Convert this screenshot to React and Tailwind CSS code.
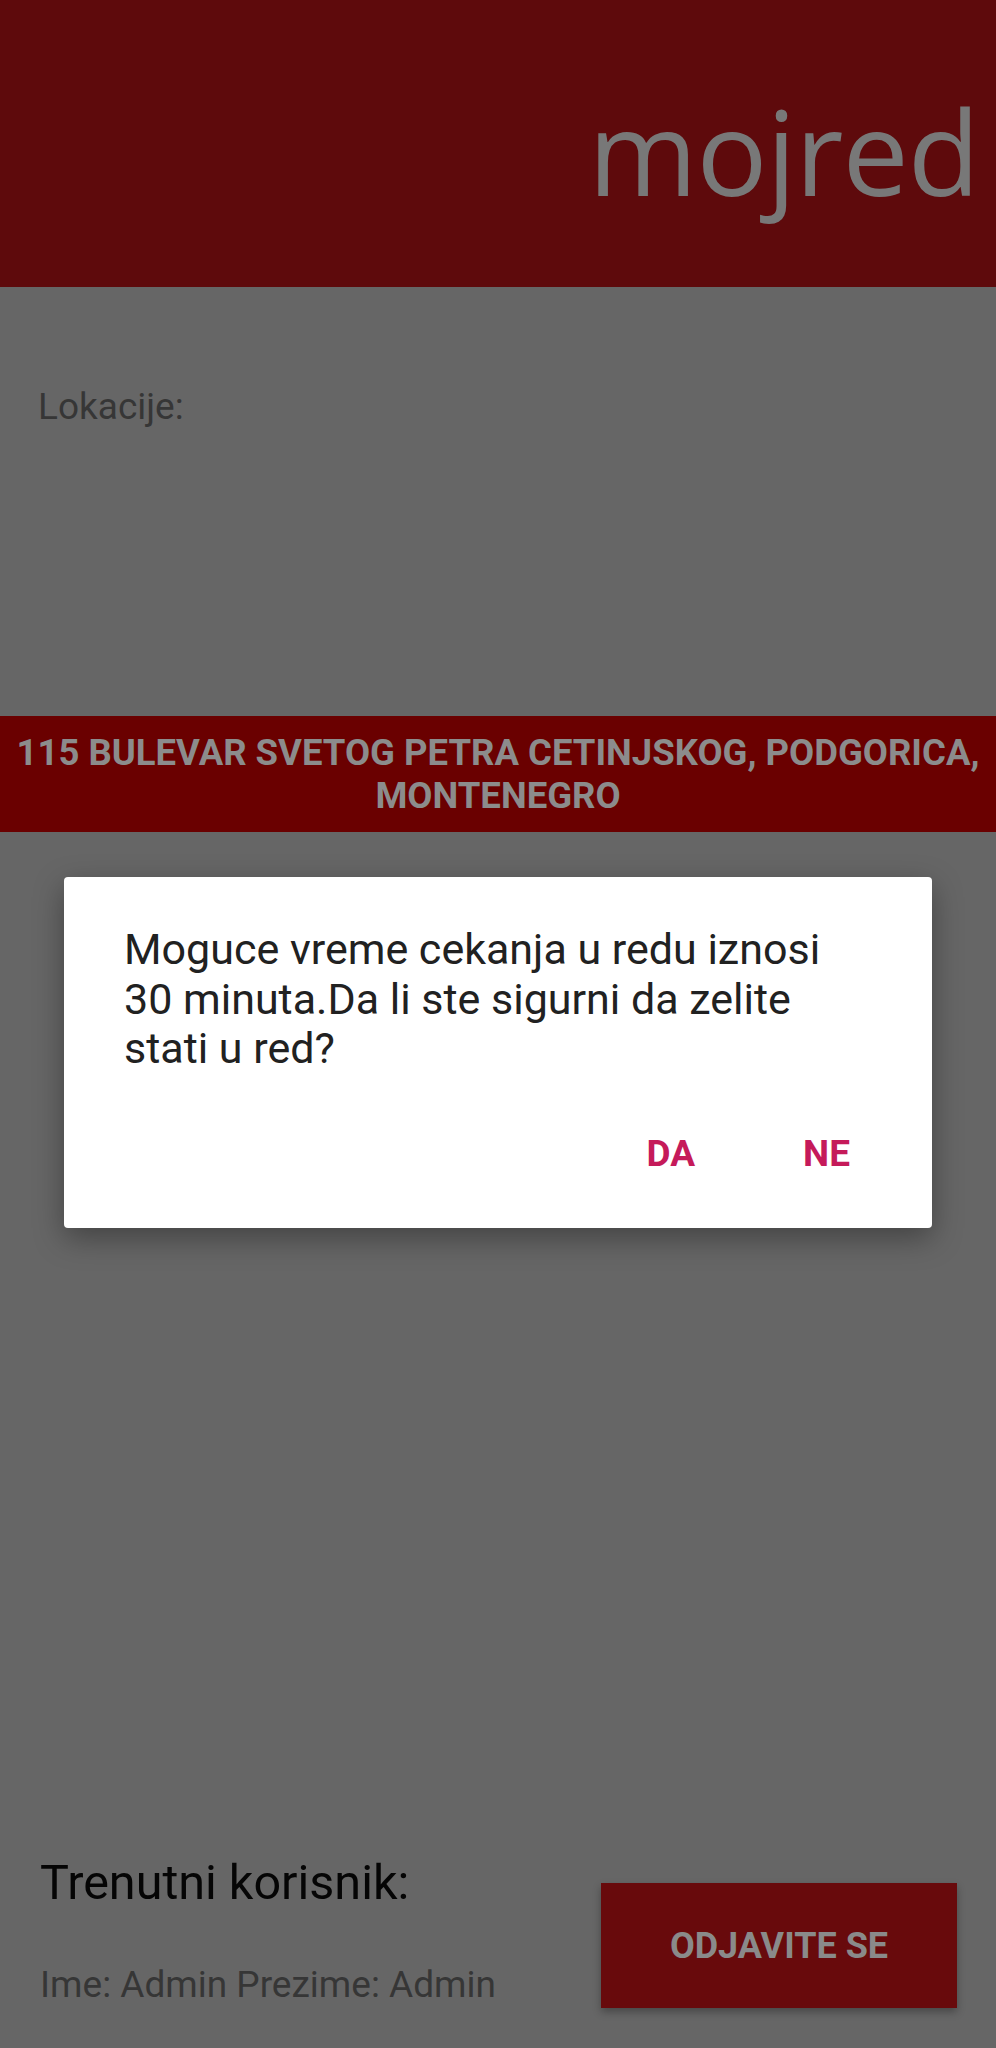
import React from 'react';

// Ekran za izbor lokacije sa otvorenim dijalogom za potvrdu
function Header() {
  return (
    <div className="h-[287px] bg-[#5e0a0c] flex justify-end items-start pt-[87px] pr-[17px]">
      <span className="font-['Open_Sans',sans-serif] tracking-[-1px] text-[118px] leading-[128px] text-[#787878]">
        mojred
      </span>
    </div>
  );
}

function ConfirmDialog() {
  return (
    <div className="absolute left-[64px] top-[877px] w-[868px] h-[351px] bg-white rounded-[4px] shadow-[0_10px_30px_rgba(0,0,0,0.35)] flex flex-col">
      <p className="pt-[48px] pl-[60px] pr-[64px] text-[43px] leading-[49.5px] text-[#212121]">
        Moguce vreme cekanja u redu iznosi 30 minuta.Da li ste sigurni da zelite stati u red?
      </p>
      <div className="flex justify-end gap-[108px] pr-[82px] mt-[58px] text-[37px] leading-[44px] font-bold text-[#c51a5a]">
        <button>DA</button>
        <button>NE</button>
      </div>
    </div>
  );
}

export default function App() {
  return (
    <div className="relative h-[2048px] w-[996px] bg-[#666666] flex flex-col font-['Roboto',sans-serif] overflow-hidden">
      <Header />

      <div className="pt-[98px] pl-[38px] text-[37px] leading-[43px] text-[#363636]">Lokacije:</div>
      <div className="h-[288px]" />

      <div className="bg-[#6a0000] py-[15px] px-[6px] text-center text-[36.5px] leading-[43px] font-bold text-[#8c8c8c]">
        115 BULEVAR SVETOG PETRA CETINJSKOG, PODGORICA, MONTENEGRO
      </div>

      <div className="mt-auto flex justify-between items-start pl-[40px] pr-[39px] pb-[40px]">
        <div className="flex flex-col">
          <span className="text-[48.5px] leading-[56px] text-[#050505]">Trenutni korisnik:</span>
          <span className="mt-[53px] text-[37px] leading-[42px] text-[#363636]">Ime: Admin Prezime: Admin</span>
        </div>
        <button className="mt-[28px] w-[356px] h-[125px] bg-[#680a0c] shadow-[0_4px_8px_rgba(0,0,0,0.3)] text-[36px] font-bold text-[#8a8a8a]">
          ODJAVITE SE
        </button>
      </div>

      <ConfirmDialog />
    </div>
  );
}
